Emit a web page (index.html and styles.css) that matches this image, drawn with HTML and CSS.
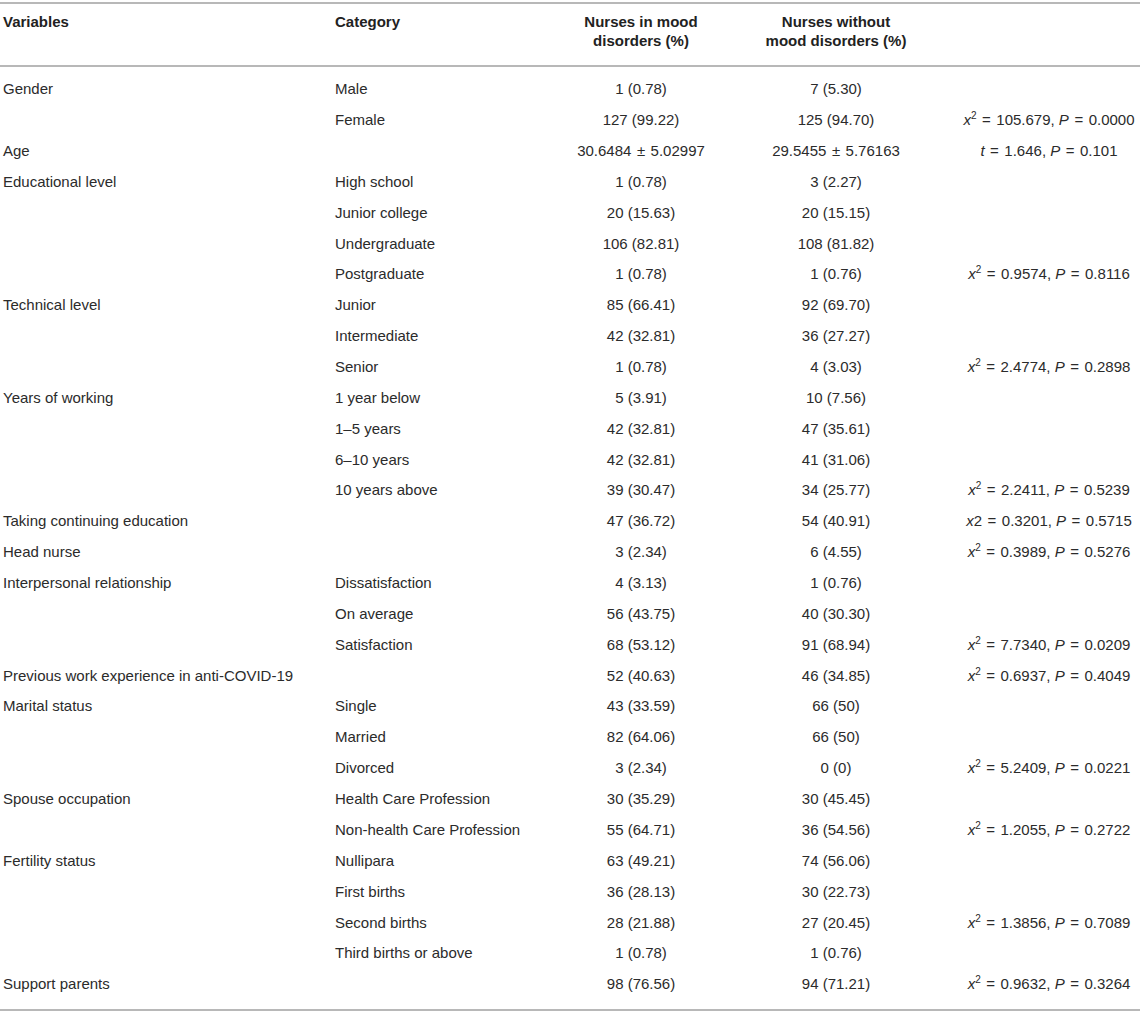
FILE: index.html
```html
<!DOCTYPE html>
<html>
<head>
<meta charset="utf-8">
<link rel="stylesheet" href="styles.css">
</head>
<body>
<table class="tbl">
<colgroup>
<col class="c1"><col class="c2"><col class="c3"><col class="c4"><col class="c5">
</colgroup>
<thead>
<tr><th class="l">Variables</th><th class="l">Category</th><th>Nurses in mood<br>disorders (%)</th><th>Nurses without<br>mood disorders (%)</th><th></th></tr>
</thead>
<tbody>
<tr class="first"><td>Gender</td><td>Male</td><td class="n">1 (0.78)</td><td class="n">7 (5.30)</td><td class="s"></td></tr>
<tr><td></td><td>Female</td><td class="n">127 (99.22)</td><td class="n">125 (94.70)</td><td class="s"><i>x</i><sup>2</sup><span class="op">=</span>105.679, <i>P</i><span class="op">=</span>0.0000</td></tr>
<tr><td>Age</td><td></td><td class="n">30.6484<span class="op">±</span>5.02997</td><td class="n">29.5455<span class="op">±</span>5.76163</td><td class="s"><i>t</i><span class="op">=</span>1.646, <i>P</i><span class="op">=</span>0.101</td></tr>
<tr><td>Educational level</td><td>High school</td><td class="n">1 (0.78)</td><td class="n">3 (2.27)</td><td class="s"></td></tr>
<tr><td></td><td>Junior college</td><td class="n">20 (15.63)</td><td class="n">20 (15.15)</td><td class="s"></td></tr>
<tr><td></td><td>Undergraduate</td><td class="n">106 (82.81)</td><td class="n">108 (81.82)</td><td class="s"></td></tr>
<tr><td></td><td>Postgraduate</td><td class="n">1 (0.78)</td><td class="n">1 (0.76)</td><td class="s"><i>x</i><sup>2</sup><span class="op">=</span>0.9574, <i>P</i><span class="op">=</span>0.8116</td></tr>
<tr><td>Technical level</td><td>Junior</td><td class="n">85 (66.41)</td><td class="n">92 (69.70)</td><td class="s"></td></tr>
<tr><td></td><td>Intermediate</td><td class="n">42 (32.81)</td><td class="n">36 (27.27)</td><td class="s"></td></tr>
<tr><td></td><td>Senior</td><td class="n">1 (0.78)</td><td class="n">4 (3.03)</td><td class="s"><i>x</i><sup>2</sup><span class="op">=</span>2.4774, <i>P</i><span class="op">=</span>0.2898</td></tr>
<tr><td>Years of working</td><td>1 year below</td><td class="n">5 (3.91)</td><td class="n">10 (7.56)</td><td class="s"></td></tr>
<tr><td></td><td>1–5 years</td><td class="n">42 (32.81)</td><td class="n">47 (35.61)</td><td class="s"></td></tr>
<tr><td></td><td>6–10 years</td><td class="n">42 (32.81)</td><td class="n">41 (31.06)</td><td class="s"></td></tr>
<tr><td></td><td>10 years above</td><td class="n">39 (30.47)</td><td class="n">34 (25.77)</td><td class="s"><i>x</i><sup>2</sup><span class="op">=</span>2.2411, <i>P</i><span class="op">=</span>0.5239</td></tr>
<tr><td>Taking continuing education</td><td></td><td class="n">47 (36.72)</td><td class="n">54 (40.91)</td><td class="s"><i>x</i>2<span class="op">=</span>0.3201, <i>P</i><span class="op">=</span>0.5715</td></tr>
<tr><td>Head nurse</td><td></td><td class="n">3 (2.34)</td><td class="n">6 (4.55)</td><td class="s"><i>x</i><sup>2</sup><span class="op">=</span>0.3989, <i>P</i><span class="op">=</span>0.5276</td></tr>
<tr><td>Interpersonal relationship</td><td>Dissatisfaction</td><td class="n">4 (3.13)</td><td class="n">1 (0.76)</td><td class="s"></td></tr>
<tr><td></td><td>On average</td><td class="n">56 (43.75)</td><td class="n">40 (30.30)</td><td class="s"></td></tr>
<tr><td></td><td>Satisfaction</td><td class="n">68 (53.12)</td><td class="n">91 (68.94)</td><td class="s"><i>x</i><sup>2</sup><span class="op">=</span>7.7340, <i>P</i><span class="op">=</span>0.0209</td></tr>
<tr><td>Previous work experience in anti-COVID-19</td><td></td><td class="n">52 (40.63)</td><td class="n">46 (34.85)</td><td class="s"><i>x</i><sup>2</sup><span class="op">=</span>0.6937, <i>P</i><span class="op">=</span>0.4049</td></tr>
<tr><td>Marital status</td><td>Single</td><td class="n">43 (33.59)</td><td class="n">66 (50)</td><td class="s"></td></tr>
<tr><td></td><td>Married</td><td class="n">82 (64.06)</td><td class="n">66 (50)</td><td class="s"></td></tr>
<tr><td></td><td>Divorced</td><td class="n">3 (2.34)</td><td class="n">0 (0)</td><td class="s"><i>x</i><sup>2</sup><span class="op">=</span>5.2409, <i>P</i><span class="op">=</span>0.0221</td></tr>
<tr><td>Spouse occupation</td><td>Health Care Profession</td><td class="n">30 (35.29)</td><td class="n">30 (45.45)</td><td class="s"></td></tr>
<tr><td></td><td>Non-health Care Profession</td><td class="n">55 (64.71)</td><td class="n">36 (54.56)</td><td class="s"><i>x</i><sup>2</sup><span class="op">=</span>1.2055, <i>P</i><span class="op">=</span>0.2722</td></tr>
<tr><td>Fertility status</td><td>Nullipara</td><td class="n">63 (49.21)</td><td class="n">74 (56.06)</td><td class="s"></td></tr>
<tr><td></td><td>First births</td><td class="n">36 (28.13)</td><td class="n">30 (22.73)</td><td class="s"></td></tr>
<tr><td></td><td>Second births</td><td class="n">28 (21.88)</td><td class="n">27 (20.45)</td><td class="s"><i>x</i><sup>2</sup><span class="op">=</span>1.3856, <i>P</i><span class="op">=</span>0.7089</td></tr>
<tr><td></td><td>Third births or above</td><td class="n">1 (0.78)</td><td class="n">1 (0.76)</td><td class="s"></td></tr>
<tr class="last"><td>Support parents</td><td></td><td class="n">98 (76.56)</td><td class="n">94 (71.21)</td><td class="s"><i>x</i><sup>2</sup><span class="op">=</span>0.9632, <i>P</i><span class="op">=</span>0.3264</td></tr>
</tbody>
</table>
</body>
</html>
```
FILE: styles.css
```css
html, body {
  margin: 0;
  padding: 0;
  background: #ffffff;
}
body {
  padding-top: 2px;
  font-family: "Liberation Sans", Arial, sans-serif;
  font-size: 15px;
  color: #2b2b2b;
}
.tbl {
  width: 1140px;
  border-collapse: collapse;
  table-layout: fixed;
  border-top: 2px solid #b8b8b8;
  border-bottom: 2px solid #b8b8b8;
}
.c1 { width: 332px; }
.c2 { width: 213px; }
.c3 { width: 192px; }
.c4 { width: 198px; }
.c5 { width: 205px; }
thead th {
  font-weight: bold;
  color: #222222;
  line-height: 19px;
  padding: 8px 3px 15px 3px;
  text-align: center;
  vertical-align: top;
  border-bottom: 2px solid #b8b8b8;
}
thead th.l { text-align: left; }
tbody td {
  line-height: 19px;
  padding: 6px 3px 5.86px 3px;
  text-align: left;
  white-space: nowrap;
  vertical-align: top;
}
tbody td.n { text-align: center; }
tbody td.s { text-align: center; padding-left: 26px; }
tbody tr.first td { padding-top: 12.3px; }
tbody tr.last td { padding-bottom: 15.7px; }
.op {
  display: inline-block;
  margin: 0 5.5px;
}
sup {
  font-size: 10px;
  line-height: 0;
  vertical-align: 6px;
}
i { font-style: italic; }
```
